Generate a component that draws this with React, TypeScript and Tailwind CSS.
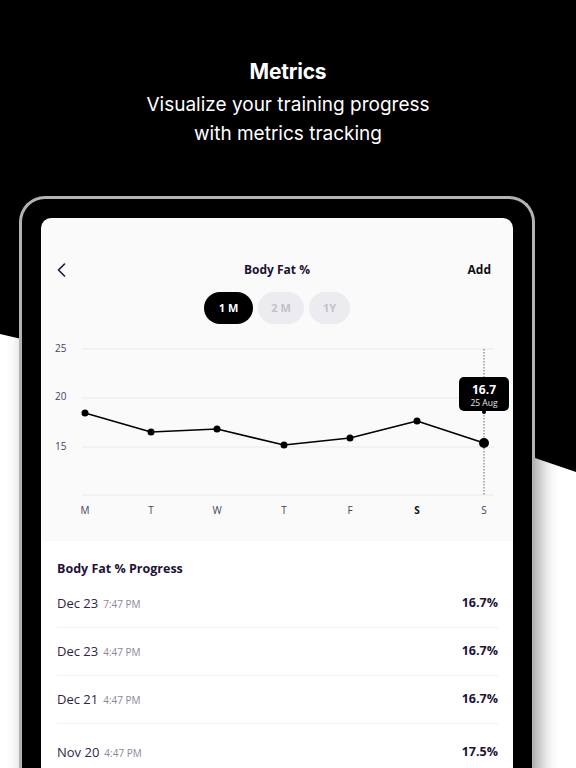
const points = [
  { x: 44, y: 79 },
  { x: 110, y: 98 },
  { x: 176, y: 95 },
  { x: 243, y: 111 },
  { x: 309, y: 104 },
  { x: 376, y: 87 },
  { x: 443, y: 109 },
];

const days = ['M', 'T', 'W', 'T', 'F', 'S', 'S'];

const rows = [
  { date: 'Dec 23', time: '7:47 PM', value: '16.7%' },
  { date: 'Dec 23', time: '4:47 PM', value: '16.7%' },
  { date: 'Dec 21', time: '4:47 PM', value: '16.7%' },
  { date: 'Nov 20', time: '4:47 PM', value: '17.5%' },
];

function Chart() {
  const line = points.map((p) => `${p.x},${p.y}`).join(' ');
  return (
    <svg width="472" height="207" viewBox="0 0 472 207" className="block" style={{ fontFamily: '"Open Sans", sans-serif' }}>
      {[15, 64, 113, 161].map((y) => (
        <line key={y} x1="41" x2="453" y1={y} y2={y} stroke="#e9e9ec" strokeWidth="1" />
      ))}
      {[
        { t: '25', y: 18 },
        { t: '20', y: 66 },
        { t: '15', y: 116 },
      ].map((l) => (
        <text key={l.t} x="14" y={l.y} fontSize="10" fill="#4a4066">
          {l.t}
        </text>
      ))}
      <line x1="443" x2="443" y1="15" y2="161" stroke="#6b6b6b" strokeWidth="1" strokeDasharray="1.5 1.5" />
      <polyline points={line} fill="none" stroke="#000" strokeWidth="1.6" strokeLinejoin="round" />
      {points.map((p, i) => (
        <circle key={i} cx={p.x} cy={p.y} r={i === points.length - 1 ? 5 : 3.5} fill="#000" />
      ))}
      {days.map((d, i) => (
        <text
          key={i}
          x={points[i].x}
          y="180"
          fontSize="10"
          textAnchor="middle"
          fill={i === 5 ? '#111' : '#4a4066'}
          fontWeight={i === 5 ? 700 : 400}
        >
          {d}
        </text>
      ))}
      <rect x="418" y="43" width="50" height="34" rx="5" fill="#000" />
      <circle cx="443" cy="78" r="2" fill="#000" />
      <text x="443" y="59.5" fontSize="12" fontWeight="700" textAnchor="middle" fill="#fff">
        16.7
      </text>
      <text x="443" y="71.5" fontSize="8.5" textAnchor="middle" fill="#e6e6e6">
        25 Aug
      </text>
    </svg>
  );
}

export default function App() {
  return (
    <div className="relative h-[768px] w-[576px] overflow-hidden bg-black">
      <div className="absolute inset-0 bg-white [clip-path:polygon(0_334px,535px_458px,100%_472px,100%_100%,0_100%)]" />

      <div className="relative pt-[58px] text-center text-white font-['Inter',sans-serif]">
        <h1 className="text-[21px] font-bold leading-[28px] tracking-[-0.2px]">Metrics</h1>
        <p className="mt-[4px] text-[19px] leading-[29px]">
          Visualize your training progress
          <br />
          with metrics tracking
        </p>
      </div>

      <div className="relative mt-[48px] ml-[19px] w-[516px] h-[600px] rounded-t-[26px] border-[3px] border-b-0 border-[#b3b3b3] bg-black px-[19px] pt-[19px] shadow-[6px_4px_18px_rgba(0,0,0,0.35)]">
        <div className="h-full overflow-hidden rounded-t-[10px] bg-[#fafafa] font-['Open_Sans',sans-serif]">
          <div className="mt-[40px] grid h-[24px] grid-cols-[1fr_auto_1fr] items-center px-[16px]">
            <svg width="9" height="14" viewBox="0 0 9 14" fill="none">
              <path d="M7.5 1 L1.5 7 L7.5 13" stroke="#1e1236" strokeWidth="1.6" strokeLinecap="round" strokeLinejoin="round" />
            </svg>
            <span className="text-[12px] font-bold text-[#1e1236]">Body Fat %</span>
            <span className="justify-self-end pr-[6px] text-[12px] font-bold text-[#111]">Add</span>
          </div>

          <div className="mt-[10px] flex justify-center gap-[5px] text-[11px] font-bold">
            <div className="flex h-[32px] w-[49px] items-center justify-center rounded-full bg-black text-white">1 M</div>
            <div className="flex h-[32px] w-[46px] items-center justify-center rounded-full bg-[#ececf0] text-[#c4c0cb]">2 M</div>
            <div className="flex h-[32px] w-[41px] items-center justify-center rounded-full bg-[#ececf0] text-[#c4c0cb]">1Y</div>
          </div>

          <div className="mt-[10px]">
            <Chart />
          </div>

          <div className="h-full bg-white pl-[16px] pr-[15px] pt-[19px]">
            <h2 className="text-[12.5px] font-bold leading-[18px] text-[#1e1236]">Body Fat % Progress</h2>
            <div className="mt-[2px]">
              {rows.map((r, i) => (
                <div
                  key={i}
                  className={`flex items-center justify-between border-b border-[#f1f1f3] ${i === 3 ? 'h-[54px] pt-[4px]' : 'h-[48px]'}`}
                >
                  <div className="flex items-baseline gap-[5px]">
                    <span className="text-[13px] text-[#2e2548]">{r.date}</span>
                    <span className="text-[10px] text-[#8d8899]">{r.time}</span>
                  </div>
                  <span className="text-[12.5px] font-bold text-[#1e1236]">{r.value}</span>
                </div>
              ))}
            </div>
          </div>
        </div>
      </div>
    </div>
  );
}
